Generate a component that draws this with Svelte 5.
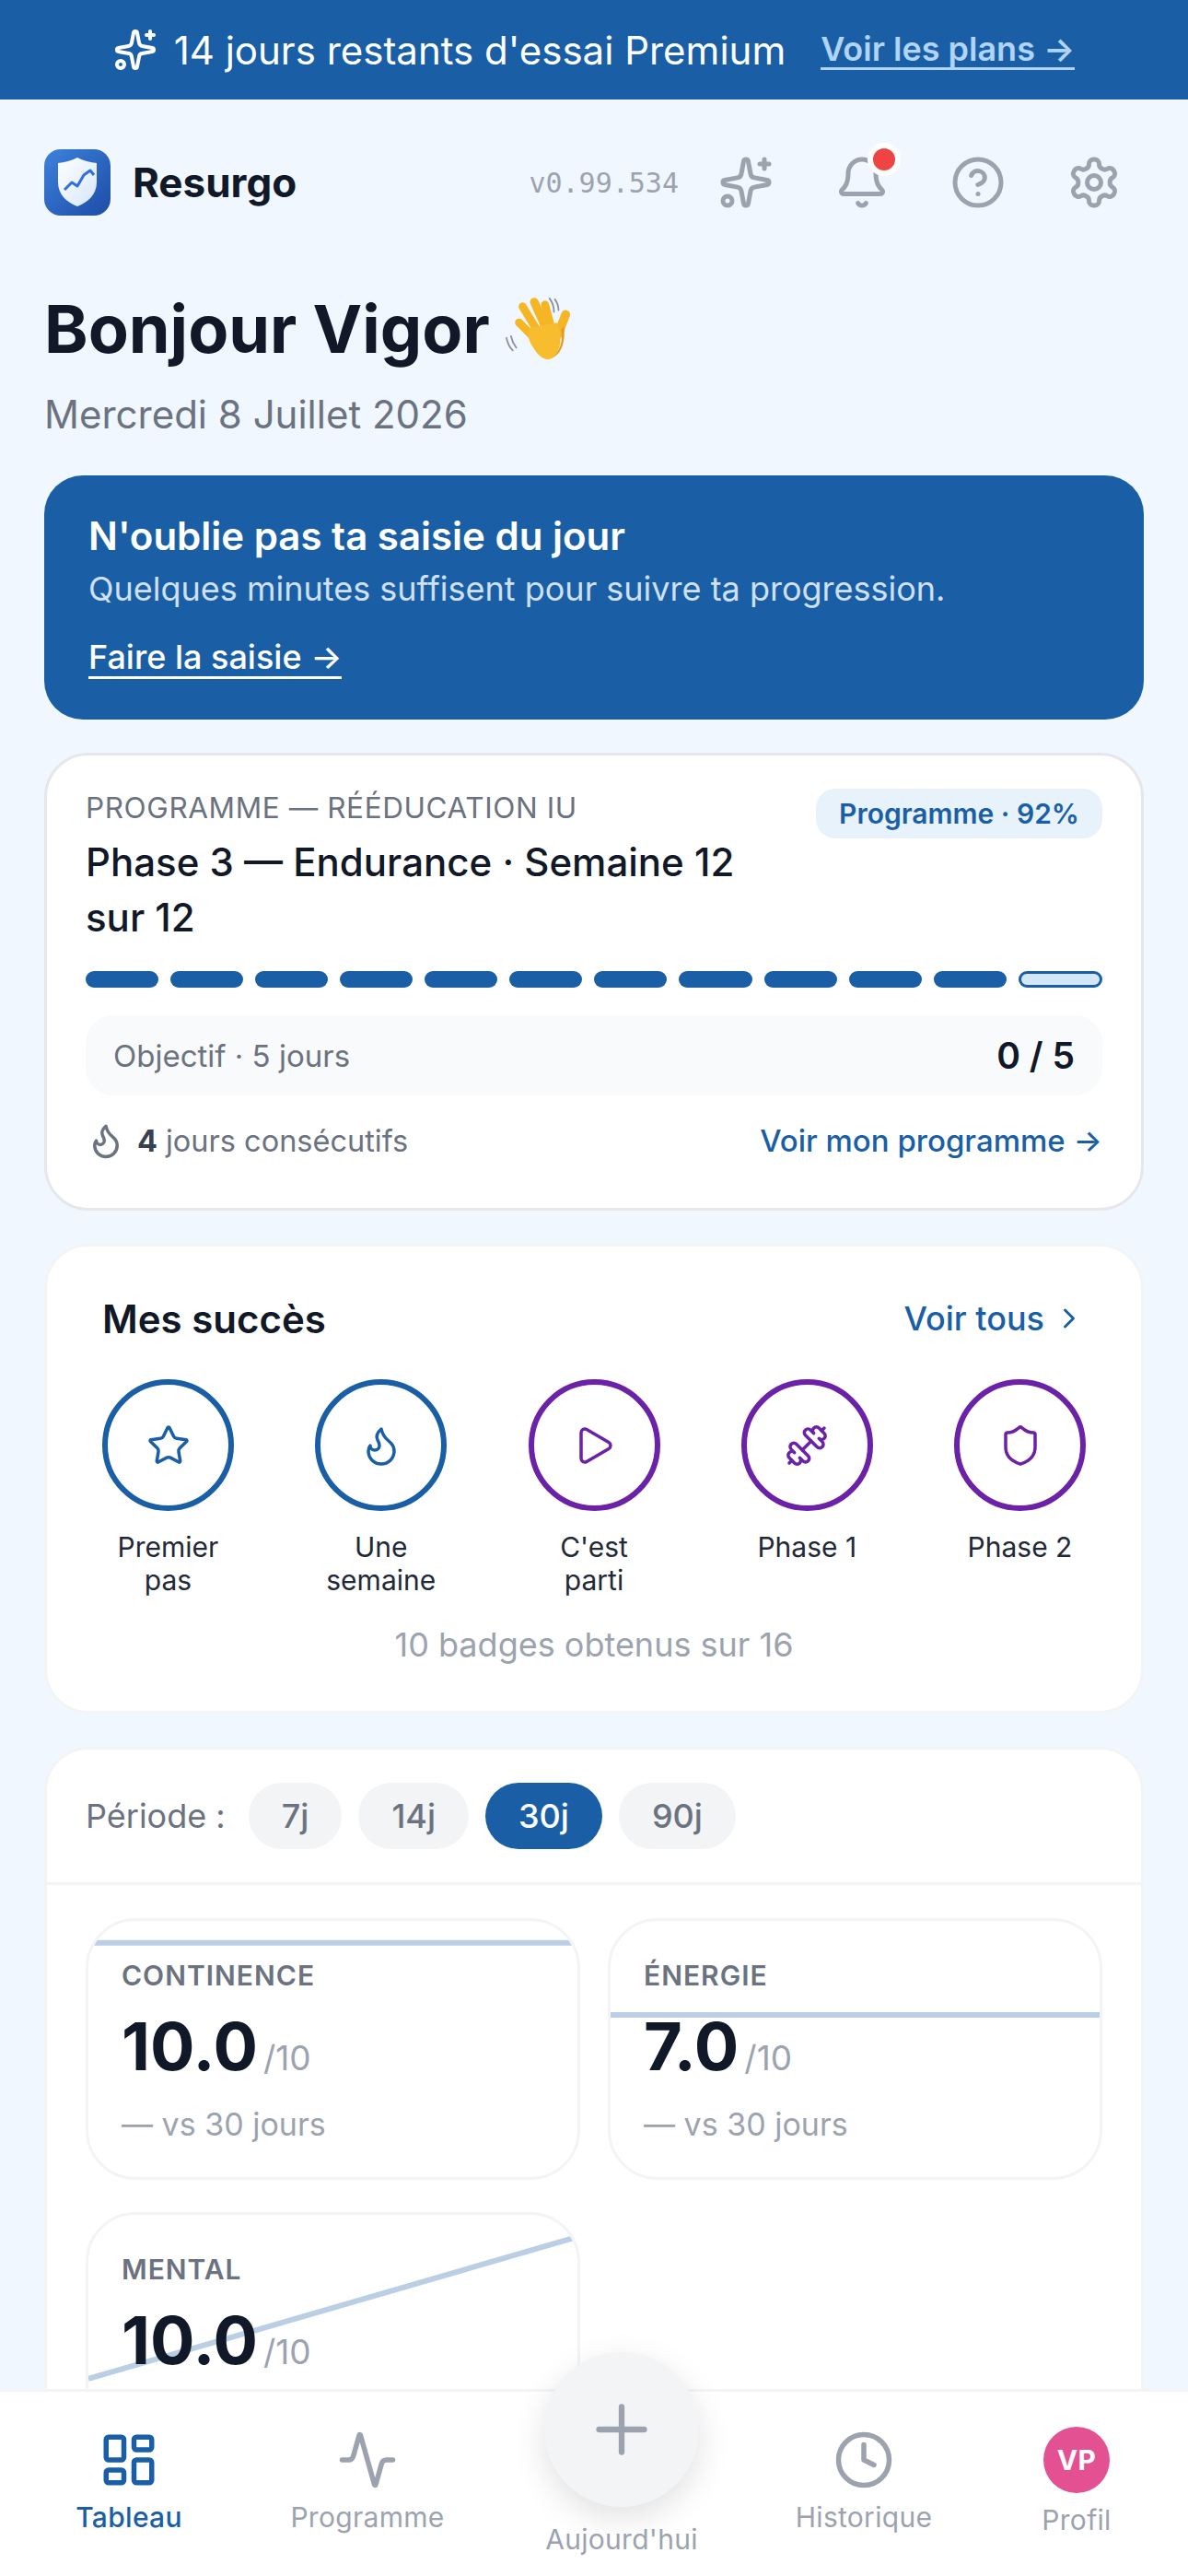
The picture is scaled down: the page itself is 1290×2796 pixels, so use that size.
<script>
  const ICONS = {
    sparkles:
      '<path d="M11.017 2.814a1 1 0 0 1 1.966 0l1.051 5.558a2 2 0 0 0 1.594 1.594l5.558 1.051a1 1 0 0 1 0 1.966l-5.558 1.051a2 2 0 0 0-1.594 1.594l-1.051 5.558a1 1 0 0 1-1.966 0l-1.051-5.558a2 2 0 0 0-1.594-1.594l-5.558-1.051a1 1 0 0 1 0-1.966l5.558-1.051a2 2 0 0 0 1.594-1.594z"/><path d="M20 2v4"/><path d="M22 4h-4"/><circle cx="4" cy="20" r="2"/>',
    bell: '<path d="M10.268 21a2 2 0 0 0 3.464 0"/><path d="M3.262 15.326A1 1 0 0 0 4 17h16a1 1 0 0 0 .74-1.673C19.41 13.956 18 12.499 18 8A6 6 0 0 0 6 8c0 4.499-1.411 5.956-2.738 7.326"/>',
    help: '<circle cx="12" cy="12" r="10"/><path d="M9.09 9a3 3 0 0 1 5.83 1c0 2-3 3-3 3"/><path d="M12 17h.01"/>',
    settings:
      '<path d="M12.22 2h-.44a2 2 0 0 0-2 2v.18a2 2 0 0 1-1 1.73l-.43.25a2 2 0 0 1-2 0l-.15-.08a2 2 0 0 0-2.73.73l-.22.38a2 2 0 0 0 .73 2.73l.15.1a2 2 0 0 1 1 1.72v.51a2 2 0 0 1-1 1.74l-.15.09a2 2 0 0 0-.73 2.73l.22.38a2 2 0 0 0 2.73.73l.15-.08a2 2 0 0 1 2 0l.43.25a2 2 0 0 1 1 1.73V20a2 2 0 0 0 2 2h.44a2 2 0 0 0 2-2v-.18a2 2 0 0 1 1-1.73l.43-.25a2 2 0 0 1 2 0l.15.08a2 2 0 0 0 2.73-.73l.22-.39a2 2 0 0 0-.73-2.73l-.15-.08a2 2 0 0 1-1-1.74v-.5a2 2 0 0 1 1-1.74l.15-.09a2 2 0 0 0 .73-2.73l-.22-.38a2 2 0 0 0-2.73-.73l-.15.08a2 2 0 0 1-2 0l-.43-.25a2 2 0 0 1-1-1.73V4a2 2 0 0 0-2-2z"/><circle cx="12" cy="12" r="3"/>',
    flame:
      '<path d="M8.5 14.5A2.5 2.5 0 0 0 11 12c0-1.38-.5-2-1-3-1.072-2.143-.224-4.054 2-6 .5 2.5 2 4.9 4 6.5 2 1.6 3 3.5 3 5.5a7 7 0 1 1-14 0c0-1.153.433-2.294 1-3a2.5 2.5 0 0 0 2.5 2.5z"/>',
    star: '<path d="M11.525 2.295a.53.53 0 0 1 .95 0l2.31 4.679a2.123 2.123 0 0 0 1.595 1.16l5.166.756a.53.53 0 0 1 .294.904l-3.736 3.638a2.123 2.123 0 0 0-.611 1.878l.882 5.14a.53.53 0 0 1-.771.56l-4.618-2.428a2.122 2.122 0 0 0-1.973 0L6.396 21.01a.53.53 0 0 1-.77-.56l.881-5.139a2.122 2.122 0 0 0-.611-1.879L2.16 9.795a.53.53 0 0 1 .294-.906l5.165-.755a2.122 2.122 0 0 0 1.597-1.16z"/>',
    play: '<path d="M5 5a2 2 0 0 1 3.008-1.728l11.997 6.998a2 2 0 0 1 .003 3.458l-12 7A2 2 0 0 1 5 19z"/>',
    dumbbell:
      '<path d="M17.596 12.768a2 2 0 1 0 2.829-2.829l-1.768-1.767a2 2 0 0 0 2.828-2.829l-2.828-2.828a2 2 0 0 0-2.829 2.828l-1.767-1.768a2 2 0 1 0-2.829 2.829z"/><path d="m2.5 21.5 1.4-1.4"/><path d="m20.1 3.9 1.4-1.4"/><path d="M5.343 21.485a2 2 0 1 0 2.829-2.828l1.767 1.768a2 2 0 1 0 2.829-2.829l-6.364-6.364a2 2 0 1 0-2.829 2.829l1.768 1.767a2 2 0 0 0-2.828 2.829z"/><path d="m9.6 14.4 4.8-4.8"/>',
    shield:
      '<path d="M20 13c0 5-3.5 7.5-7.66 8.95a1 1 0 0 1-.67-.01C7.5 20.5 4 18 4 13V6a1 1 0 0 1 1-1c2 0 4.5-1.2 6.24-2.72a1.17 1.17 0 0 1 1.52 0C14.51 3.81 17 5 19 5a1 1 0 0 1 1 1z"/>',
    chevron: '<path d="m9 18 6-6-6-6"/>',
    dashboard:
      '<rect width="7" height="9" x="3" y="3" rx="1"/><rect width="7" height="5" x="14" y="3" rx="1"/><rect width="7" height="9" x="14" y="12" rx="1"/><rect width="7" height="5" x="3" y="16" rx="1"/>',
    activity:
      '<path d="M22 12h-2.48a2 2 0 0 0-1.93 1.46l-2.35 8.36a.25.25 0 0 1-.48 0L9.24 2.18a.25.25 0 0 0-.48 0l-2.35 8.36A2 2 0 0 1 4.49 12H2"/>',
    clock: '<circle cx="12" cy="12" r="10"/><polyline points="12 6 12 12 16 14"/>',
    plus: '<path d="M5 12h14"/><path d="M12 5v14"/>',
  };

  const badges = [
    { label: "Premier pas", icon: "star", tone: "blue" },
    { label: "Une semaine", icon: "flame", tone: "blue" },
    { label: "C'est parti", icon: "play", tone: "purple" },
    { label: "Phase 1", icon: "dumbbell", tone: "purple" },
    { label: "Phase 2", icon: "shield", tone: "purple" },
  ];

  const periods = ["7j", "14j", "30j", "90j"];
  const activePeriod = "30j";

  // Sparkline endpoints are percentages of the card height
  const metrics = [
    { label: "CONTINENCE", value: "10.0", from: 8.5, to: 8.5 },
    { label: "ÉNERGIE", value: "7.0", from: 36.7, to: 36.7 },
    { label: "MENTAL", value: "10.0", from: 64, to: 8.6 },
  ];

  const segments = Array.from({ length: 12 }, (_, i) => i < 11);
</script>

{#snippet icon(name, cls)}
  <svg class={cls} viewBox="0 0 24 24" fill="none" stroke="currentColor" stroke-width="2" stroke-linecap="round" stroke-linejoin="round">
    {@html ICONS[name]}
  </svg>
{/snippet}

<div class="screen">
  <div class="trial">
    {@render icon("sparkles", "trial-icon")}
    <span class="trial-text">14 jours restants d'essai Premium</span>
    <a class="trial-link" href="#plans">Voir les plans →</a>
  </div>

  <main class="page">
    <header class="top">
      <svg class="logo" viewBox="0 0 72 72">
        <defs>
          <linearGradient id="logo-bg" x1="0" y1="0" x2="1" y2="1">
            <stop offset="0" stop-color="#3d82dc" />
            <stop offset="1" stop-color="#1d4ca6" />
          </linearGradient>
          <linearGradient id="logo-shield" x1="0" y1="0" x2="1" y2="1">
            <stop offset="0" stop-color="#ffffff" />
            <stop offset="1" stop-color="#d6e6fb" />
          </linearGradient>
        </defs>
        <rect width="72" height="72" rx="18" fill="url(#logo-bg)" />
        <path d="M36 9 C42 12 50 14.500 57 15 V36 C57 49 47 58 36 62 C25 58 15 49 15 36 V15 C22 14.500 30 12 36 9Z" fill="url(#logo-shield)" />
        <path d="M22 44 L30 36 L36 40 L43 28 L50 23 L54 28" fill="none" stroke="#2f6fe4" stroke-width="3" stroke-linejoin="round" />
      </svg>
      <span class="brand">Resurgo</span>
      <span class="version">v0.99.534</span>
      <div class="top-actions">
        <span class="top-btn">{@render icon("sparkles", "top-icon")}</span>
        <span class="top-btn">{@render icon("bell", "top-icon")}<i class="dot"></i></span>
        <span class="top-btn">{@render icon("help", "top-icon")}</span>
        <span class="top-btn">{@render icon("settings", "top-icon")}</span>
      </div>
    </header>

    <div class="greet">
      <h1>Bonjour Vigor</h1>
      <svg class="wave" viewBox="0 0 76 74">
        <g fill="none" stroke="#8a8f98" stroke-width="1.800" stroke-linecap="round">
          <path d="M50 3 C53 7 55 12 55 18" />
          <path d="M56 4 C59 8 60 12 60 16" />
          <path d="M2 47 C3 52 5 57 9 61" />
          <path d="M7 45 C8 50 10 54 13 58" />
        </g>
        <g fill="none" stroke="#f6b624" stroke-linecap="round">
          <path d="M20 12 L37 40" stroke-width="9" />
          <path d="M33 7 L46 36" stroke-width="9.500" />
          <path d="M45 10 L52 36" stroke-width="9" />
          <path d="M16 30 L34 48" stroke-width="9" />
          <path d="M68 21 L59 44" stroke-width="10" />
        </g>
        <path d="M28 36 L58 30 C64 44 64 60 54 69 C46 74 38 68 32 58 C28 52 24 44 28 36Z" fill="#f8bd2e" />
        <path d="M54 69 C63 60 65 48 63 38 L66 34 C68 50 64 64 54 69Z" fill="#e8981b" />
      </svg>
    </div>
    <p class="date">Mercredi 8 Juillet 2026</p>

    <section class="reminder">
      <h2>N'oublie pas ta saisie du jour</h2>
      <p>Quelques minutes suffisent pour suivre ta progression.</p>
      <a href="#saisie">Faire la saisie →</a>
    </section>

    <section class="card program">
      <div class="program-head">
        <div>
          <div class="eyebrow">PROGRAMME — RÉÉDUCATION IU</div>
          <div class="program-title">Phase 3 — Endurance · Semaine 12 sur 12</div>
        </div>
        <span class="pct">Programme · 92%</span>
      </div>
      <div class="segments">
        {#each segments as done}
          <span class="seg" class:todo={!done}></span>
        {/each}
      </div>
      <div class="goal">
        <span>Objectif · 5 jours</span>
        <strong>0 / 5</strong>
      </div>
      <div class="program-foot">
        <span class="streak">
          {@render icon("flame", "streak-icon")}
          <b>4</b> jours consécutifs
        </span>
        <a href="#programme">Voir mon programme →</a>
      </div>
    </section>

    <section class="card success">
      <div class="success-head">
        <h3>Mes succès</h3>
        <a href="#succes">Voir tous {@render icon("chevron", "chev")}</a>
      </div>
      <div class="badges">
        {#each badges as b}
          <div class="badge">
            <span class="ring {b.tone}">{@render icon(b.icon, "ring-icon")}</span>
            <span class="badge-label">{b.label}</span>
          </div>
        {/each}
      </div>
      <p class="badge-count">10 badges obtenus sur 16</p>
    </section>

    <section class="card stats">
      <div class="period">
        <span class="period-label">Période :</span>
        {#each periods as p}
          <span class="pill" class:on={p === activePeriod}>{p}</span>
        {/each}
      </div>
      <div class="metrics">
        {#each metrics as m}
          <div class="metric">
            <svg class="spark" viewBox="0 0 100 100" preserveAspectRatio="none">
              <line x1="0" y1={m.from} x2="100" y2={m.to} />
            </svg>
            <div class="metric-label">{m.label}</div>
            <div class="metric-value">{m.value}<small>/10</small></div>
            <div class="metric-delta">— vs 30 jours</div>
          </div>
        {/each}
      </div>
    </section>
  </main>

  <nav class="tabs">
    <div class="tab active">{@render icon("dashboard", "tab-icon")}<span>Tableau</span></div>
    <div class="tab">{@render icon("activity", "tab-icon")}<span>Programme</span></div>
    <div class="tab today">
      <span class="fab">{@render icon("plus", "fab-icon")}</span>
      <span>Aujourd'hui</span>
    </div>
    <div class="tab">{@render icon("clock", "tab-icon")}<span>Historique</span></div>
    <div class="tab profile"><span class="avatar">VP</span><span>Profil</span></div>
  </nav>
</div>

<style>
  :global(body) { margin: 0; background: #f0f7ff; }

  .screen {
    position: relative; height: 2796px; overflow: hidden;
    background: #f0f7ff; color: #111827;
    font-family: Inter, "Liberation Sans", sans-serif;
  }
  a { color: inherit; text-decoration: none; }
  h1, h2, h3, p { margin: 0; }

  /* Trial banner */
  .trial {
    height: 108px; background: #1a5fa6; color: #fff;
    display: flex; align-items: center; justify-content: center;
    font-size: 42px;
  }
  .trial-icon { width: 48px; height: 48px; margin-right: 18px; }
  .trial-link {
    margin-left: 38px; font-size: 36px; font-weight: 600; color: #b0d4f6;
    border-bottom: 3px solid #b0d4f6; line-height: 40px;
  }

  .page { padding: 54px 48px 0; }

  /* Header */
  .top { display: flex; align-items: center; height: 72px; }
  .logo { width: 72px; height: 72px; flex: none; }
  .brand { margin-left: 24px; font-size: 44px; font-weight: 700; }
  .version {
    margin-left: auto; margin-right: 43px;
    font-family: "DejaVu Sans Mono", monospace; font-size: 30px; color: #9ca3af;
  }
  .top-actions { display: flex; gap: 66px; margin-right: 24px; }
  .top-btn { position: relative; width: 60px; height: 60px; color: #9ca3af; }
  .top-icon { display: block; width: 60px; height: 60px; }
  .dot {
    position: absolute; top: -13px; right: -12px; width: 24px; height: 24px;
    background: #ef4444; border: 6px solid #fff; border-radius: 50%;
  }

  .greet { display: flex; align-items: center; margin-top: 78px; height: 90px; }
  h1 { font-size: 72px; font-weight: 700; line-height: 90px; }
  .wave { width: 74px; height: 74px; margin-left: 16px; }
  .date { margin-top: 23px; font-size: 42px; line-height: 50px; color: #6b7280; }

  /* Reminder */
  .reminder {
    margin-top: 41px; padding: 39px 48px 44px; border-radius: 42px;
    background: #1a5fa6; color: #fff;
  }
  .reminder h2 { font-size: 42px; font-weight: 600; line-height: 54px; }
  .reminder p { margin-top: 3px; font-size: 36px; line-height: 54px; color: #cfe0f2; }
  .reminder a {
    display: inline-block; margin-top: 26px; font-size: 36px; font-weight: 500;
    line-height: 42px; border-bottom: 3px solid #fff;
  }

  .card {
    margin-top: 36px; background: #fff; border: 3px solid #f3f4f6; border-radius: 48px;
  }

  /* Programme */
  .program { padding: 36px 42px 0; height: 497px; box-sizing: border-box; border-color: #e5e7eb; }
  .program-head { display: flex; justify-content: space-between; align-items: flex-start; gap: 24px; }
  .eyebrow { font-size: 31.500px; line-height: 42px; font-weight: 400; letter-spacing: .6px; color: #6b7280; }
  .program-title { margin-top: 8px; font-size: 42px; line-height: 60px; font-weight: 500; }
  .pct {
    flex: none; padding: 0 25px; height: 54px; line-height: 54px;
    border-radius: 21px; background: #e8f2fb; color: #1a5fa6;
    font-size: 30px; font-weight: 600; white-space: nowrap;
  }
  .segments { display: flex; gap: 13px; margin-top: 28px; }
  .seg { flex: 1; height: 18px; border-radius: 9px; background: #1a5fa6; }
  .seg.todo { box-sizing: border-box; background: #d4e7f9; border: 3px solid #1a5fa6; flex: 1.080; }
  .goal {
    display: flex; justify-content: space-between; align-items: center;
    height: 87px; margin-top: 30px; padding: 0 30px; border-radius: 30px;
    background: #f9fafb; font-size: 33px; color: #6b7280;
  }
  .goal strong { font-size: 39px; font-weight: 600; color: #111827; }
  .program-foot {
    display: flex; justify-content: space-between; align-items: center;
    margin-top: 31px; height: 36px; font-size: 33px; color: #6b7280;
  }
  .program-foot a { color: #1a5fa6; font-weight: 500; }
  .streak { display: flex; align-items: center; font-size: 32.500px; }
  .streak-icon { width: 42px; height: 42px; margin-right: 13px; margin-left: 1px; color: #6b7280; }
  .streak b { margin-right: 9px; font-weight: 700; color: #374151; }

  /* Succès */
  .success { height: 510px; box-sizing: border-box; padding: 54px 60px 0; }
  .success-head { display: flex; justify-content: space-between; align-items: center; height: 48px; }
  .success-head h3 { font-size: 42px; font-weight: 600; }
  .success-head a { display: flex; align-items: center; gap: 9px; font-size: 36px; font-weight: 500; color: #1a5fa6; }
  .chev { width: 36px; height: 36px; }
  .badges { display: flex; justify-content: space-between; margin-top: 42px; }
  .badge { width: 143px; display: flex; flex-direction: column; align-items: center; }
  .ring {
    box-sizing: border-box; width: 143px; height: 143px; border-radius: 50%;
    border: 6px solid currentColor; display: flex; align-items: center; justify-content: center;
  }
  .ring.blue { color: #1a5fa6; }
  .ring.purple { color: #6b21a8; }
  .ring-icon { width: 48px; height: 48px; stroke-width: 1.750; }
  .badge-label {
    margin-top: 21px; font-size: 30px; line-height: 36px; text-align: center; color: #1f2937;
  }
  .badge-count { margin-top: 30px; font-size: 36px; line-height: 44px; text-align: center; color: #9ca3af; }

  /* Stats */
  .stats { padding-bottom: 60px; }
  .period {
    display: flex; align-items: center; gap: 18px;
    padding: 36px 42px 36px; border-bottom: 3px solid #f3f4f6;
  }
  .period-label { margin-right: 7px; font-size: 36px; color: #6b7280; }
  .pill {
    padding: 0 36px; height: 72px; line-height: 72px; border-radius: 36px;
    background: #f3f4f6; color: #6b7280; font-size: 36px; font-weight: 500;
  }
  .pill.on { background: #1a5fa6; color: #fff; }
  .metrics {
    display: grid; grid-template-columns: 1fr 1fr; gap: 35px 30px; padding: 36px 42px;
  }
  .metric {
    position: relative; overflow: hidden; height: 284px; box-sizing: border-box;
    padding: 39px 36px 0; border: 3px solid #f3f4f6; border-radius: 54px;
  }
  .spark { position: absolute; inset: 0; width: 100%; height: 100%; }
  .spark line { stroke: #1a5fa6; stroke-opacity: .3; stroke-width: 6px; vector-effect: non-scaling-stroke; }
  .metric-label, .metric-value, .metric-delta { position: relative; }
  .metric-label { font-size: 30px; line-height: 40px; font-weight: 600; letter-spacing: 1px; color: #6b7280; }
  .metric-value { margin-top: 18px; font-size: 72px; line-height: 78px; font-weight: 700; }
  .metric-value small { margin-left: 6px; font-size: 37px; font-weight: 400; color: #9ca3af; }
  .metric-delta { margin-top: 11px; font-size: 34px; line-height: 44px; color: #9ca3af; }

  /* Bottom nav */
  .tabs {
    position: absolute; left: 0; right: 0; bottom: 0; height: 200px;
    display: grid; grid-template-columns: 280px 238px 314px 212px 246px;
    background: #fff; border-top: 3px solid #f3f4f6;
  }
  .tab {
    display: flex; flex-direction: column; align-items: center; padding-top: 41px;
    font-size: 30px; letter-spacing: .3px; line-height: 40px; color: #9ca3af;
  }
  .tab.active { color: #1a5fa6; font-weight: 500; }
  .tab-icon { width: 66px; height: 66px; margin-bottom: 9px; }
  .today { padding-top: 0; margin-top: -43px; }
  .fab {
    width: 168px; height: 168px; margin-bottom: 15px; border-radius: 50%; background: #f3f4f6;
    display: flex; align-items: center; justify-content: center;
    box-shadow: 0 12px 36px rgba(0, 0, 0, .12);
  }
  .fab-icon { width: 84px; height: 84px; margin-bottom: 0; stroke-width: 1.800; }
  .profile { padding-left: 4px; padding-top: 38px; }
  .avatar {
    width: 72px; height: 72px; margin-bottom: 9px; border-radius: 50%;
    background: #e45193; color: #fff; font-size: 30px; font-weight: 700;
    display: flex; align-items: center; justify-content: center;
  }
</style>
